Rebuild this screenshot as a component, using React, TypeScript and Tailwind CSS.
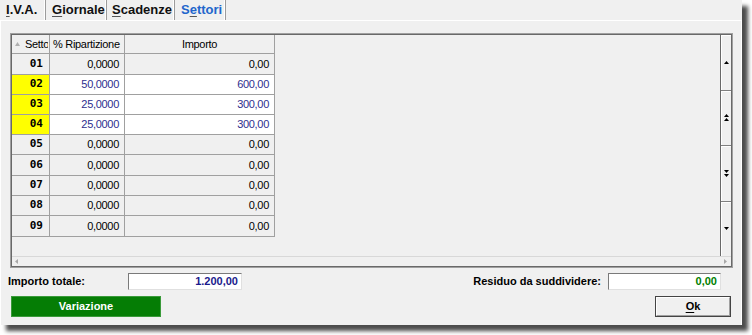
import React from "react";

type Row = { n: string; p: string; i: string; hl: boolean; h: string };

const rows: Row[] = [
  { n: "01", p: "0,0000", i: "0,00", hl: false, h: "h-[21px]" },
  { n: "02", p: "50,0000", i: "600,00", hl: true, h: "h-[20px]" },
  { n: "03", p: "25,0000", i: "300,00", hl: true, h: "h-[20px]" },
  { n: "04", p: "25,0000", i: "300,00", hl: true, h: "h-[20px]" },
  { n: "05", p: "0,0000", i: "0,00", hl: false, h: "h-[20px]" },
  { n: "06", p: "0,0000", i: "0,00", hl: false, h: "h-[21px]" },
  { n: "07", p: "0,0000", i: "0,00", hl: false, h: "h-[20px]" },
  { n: "08", p: "0,0000", i: "0,00", hl: false, h: "h-[20px]" },
  { n: "09", p: "0,0000", i: "0,00", hl: false, h: "h-[21px]" },
];

function Up({ double }: { double?: boolean }) {
  return double ? (
    <svg width="5" height="7" viewBox="0 0 5 7">
      <polygon points="0,3 2.5,0 5,3" fill="#000" />
      <polygon points="0,7 2.5,4 5,7" fill="#000" />
    </svg>
  ) : (
    <svg width="5" height="3" viewBox="0 0 5 3">
      <polygon points="0,3 2.5,0 5,3" fill="#000" />
    </svg>
  );
}

function Down({ double }: { double?: boolean }) {
  return double ? (
    <svg width="5" height="7" viewBox="0 0 5 7">
      <polygon points="0,0 2.5,3 5,0" fill="#000" />
      <polygon points="0,4 2.5,7 5,4" fill="#000" />
    </svg>
  ) : (
    <svg width="5" height="3" viewBox="0 0 5 3">
      <polygon points="0,0 2.5,3 5,0" fill="#000" />
    </svg>
  );
}

function Tab({
  u,
  rest,
  pre,
  w,
  pl,
  active,
}: {
  pre?: string;
  u: string;
  rest: string;
  w: string;
  pl: string;
  active?: boolean;
}) {
  return (
    <div
      className={`${w} ${pl} h-[20px] flex items-center border-r border-[#9c9c9c] shadow-[inset_-1px_0_0_#ffffff] text-[13px] font-bold whitespace-nowrap ${
        active ? "text-[#2266cc]" : "text-[#111111]"
      }`}
    >
      <span>
        {pre}
        <span className="underline decoration-[#555555] underline-offset-[2px]">{u}</span>
        {rest}
      </span>
    </div>
  );
}

export default function App() {
  return (
    <div className="w-[752px] h-[335px] bg-white overflow-hidden font-['Liberation_Sans',Arial,sans-serif]">
      <div className="w-[742px] h-[325px] bg-[#f0f0f0] flex flex-col shadow-[6px_6px_4px_0px_rgba(0,0,0,0.7)]">
        {/* tabs */}
        <div className="h-[20px] flex items-stretch">
          <Tab u="I" rest=".V.A." w="w-[46px]" pl="pl-[6px]" />
          <Tab u="G" rest="iornale" w="w-[61px]" pl="pl-[6px]" />
          <Tab u="S" rest="cadenze" w="w-[68px]" pl="pl-[5px]" />
          <Tab pre="S" u="e" rest="ttori" w="w-[51px]" pl="pl-[6px]" active />
        </div>
        {/* tab page */}
        <div className="flex-1 flex flex-col border-t border-l border-r border-t-white border-l-white border-r-white">
          <div className="pt-[12px] pl-[9px]">
            {/* grid frame */}
            <div className="w-[723px] h-[235px] border border-[#a0a0a0]">
              <div className="w-full h-full border border-[#696969] flex flex-col">
                <div className="flex-1 flex min-h-0">
                  {/* table area */}
                  <div className="flex-1 flex flex-col text-[11px] tracking-[-0.3px]">
                    {/* header */}
                    <div className="h-[19px] flex border-b border-[#a0a0a0] w-[263px] text-black">
                      <div className="w-[38px] border-r border-[#a0a0a0] flex items-center overflow-hidden pl-[3px]">
                        <svg width="5" height="4" viewBox="0 0 5 4" className="shrink-0">
                          <polygon points="0,4 2.5,0 5,4" fill="#b0b0b0" />
                        </svg>
                        <span className="ml-[5px] w-[23px] shrink-0 overflow-hidden whitespace-nowrap">Setto</span>
                      </div>
                      <div className="w-[75px] border-r border-[#a0a0a0] flex items-center pl-[3px] whitespace-nowrap">
                        % Ripartizione
                      </div>
                      <div className="w-[150px] border-r border-[#a0a0a0] flex items-center justify-center">
                        Importo
                      </div>
                    </div>
                    {rows.map((r) => (
                      <div
                        key={r.n}
                        className={`${r.h} flex border-b border-[#a0a0a0] w-[263px] ${
                          r.hl ? "text-[#2e2e8e]" : "text-black"
                        }`}
                      >
                        <div
                          className={`w-[38px] border-r border-[#a0a0a0] flex items-center justify-end pr-[6px] font-['DejaVu_Sans_Mono',monospace] font-bold text-[11px] tracking-normal text-black ${
                            r.hl ? "bg-[#ffff00]" : "bg-[#f0f0f0]"
                          }`}
                        >
                          {r.n}
                        </div>
                        <div
                          className={`w-[75px] border-r border-[#a0a0a0] flex items-center justify-end pr-[5px] ${
                            r.hl ? "bg-white" : "bg-[#f0f0f0]"
                          }`}
                        >
                          {r.p}
                        </div>
                        <div
                          className={`w-[150px] border-r border-[#a0a0a0] flex items-center justify-end pr-[5px] ${
                            r.hl ? "bg-white" : "bg-[#f0f0f0]"
                          }`}
                        >
                          {r.i}
                        </div>
                      </div>
                    ))}
                  </div>
                  {/* vertical scrollbar */}
                  <div className="w-[11px] border-l border-[#696969] flex flex-col">
                    <div className="flex-1 border-b border-[#808080] flex items-center justify-center shadow-[inset_1px_1px_0_#ffffff]">
                      <Up />
                    </div>
                    <div className="flex-1 border-b border-[#808080] flex items-center justify-center shadow-[inset_1px_1px_0_#ffffff]">
                      <Up double />
                    </div>
                    <div className="flex-1 border-b border-[#808080] flex items-center justify-center shadow-[inset_1px_1px_0_#ffffff]">
                      <Down double />
                    </div>
                    <div className="flex-1 flex items-center justify-center shadow-[inset_1px_1px_0_#ffffff]">
                      <Down />
                    </div>
                  </div>
                </div>
                {/* horizontal scrollbar */}
                <div className="h-[10px] border-t border-[#d8d8d8] flex items-center justify-between pl-[3px] pr-[4px]">
                  <svg width="3" height="5" viewBox="0 0 3 5">
                    <polygon points="3,0 0,2.5 3,5" fill="#a8a8a8" />
                  </svg>
                  <svg width="3" height="5" viewBox="0 0 3 5">
                    <polygon points="0,0 3,2.5 0,5" fill="#a8a8a8" />
                  </svg>
                </div>
              </div>
            </div>
          </div>
          {/* totals row */}
          <div className="mt-[5px] h-[17px] flex items-center text-[11px] font-bold">
            <div className="w-[127px] pl-[7px] text-black">Importo totale:</div>
            <div className="w-[114px] h-[17px] bg-white border-t border-l border-[#7a7a7a] border-r border-b border-r-[#e0e0e0] border-b-[#e0e0e0] flex items-center justify-end pr-[3px] text-[#1a1a8c]">
              1.200,00
            </div>
            <div className="flex-1" />
            <div className="text-black">Residuo da suddividere:</div>
            <div className="ml-[7px] w-[113px] h-[17px] bg-white border-t border-l border-[#7a7a7a] border-r border-b border-r-[#e0e0e0] border-b-[#e0e0e0] flex items-center justify-end pr-[3px] text-[#008000]">
              0,00
            </div>
            <div className="w-[20px]" />
          </div>
          {/* buttons row */}
          <div className="mt-[6px] h-[21px] flex items-stretch text-[11px] font-bold">
            <div className="ml-[10px] w-[150px] bg-[#057d05] border border-[#3a9a3a] flex items-center justify-center text-white">
              Variazione
            </div>
            <div className="flex-1" />
            <div className="w-[76px] border border-[#444444] mr-[10px]">
              <div className="w-full h-full border border-t-white border-l-white border-r-[#a0a0a0] border-b-[#a0a0a0] flex items-center justify-center text-black">
                <span>
                  <span className="underline underline-offset-[2px]">O</span>k
                </span>
              </div>
            </div>
          </div>
        </div>
      </div>
    </div>
  );
}
